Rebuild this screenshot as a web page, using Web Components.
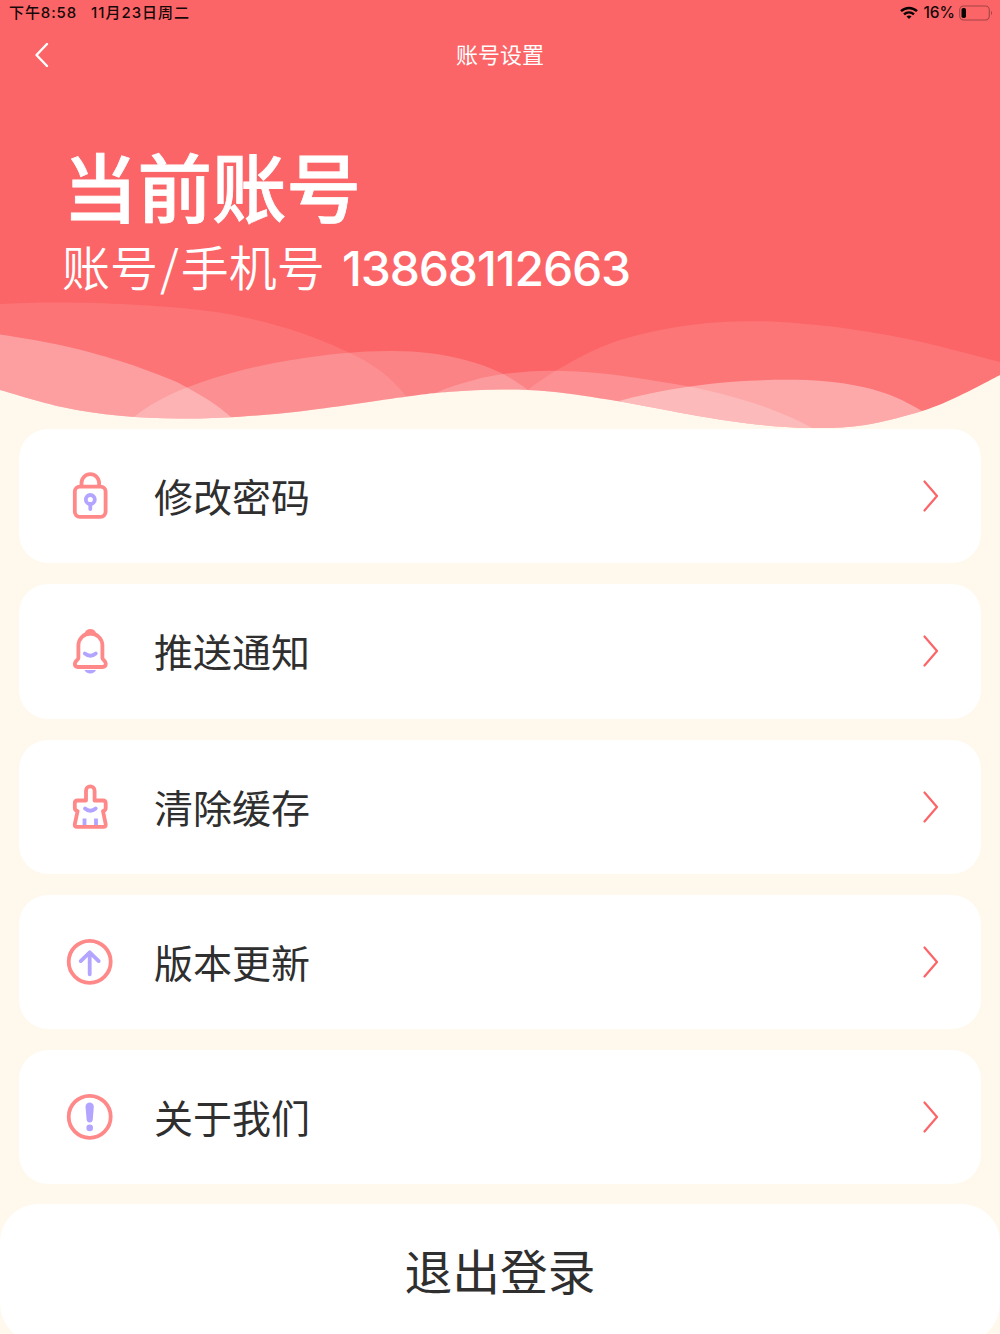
<!DOCTYPE html>
<html lang="zh-CN">
<head>
<meta charset="utf-8">
<title>账号设置</title>
<style>
  html, body {
    margin: 0;
    background: #fff8ed;
  }

  body {
    width: 1000px;
    height: 1334px;
    overflow: hidden;
    font-family: Inter, "Noto Sans CJK SC", sans-serif;
    color: #2f2f2f;
  }
</style>
</head>
<body>
<account-settings></account-settings>

<script>
// Catmull-Rom through the points, written out as cubic beziers
function smoothPath(points) {
  let d = `M${points[0]}`;
  for (let i = 0; i < points.length - 1; i++) {
    const p0 = points[i - 1] || points[i];
    const p1 = points[i];
    const p2 = points[i + 1];
    const p3 = points[i + 2] || p2;
    const c1 = [p1[0] + (p2[0] - p0[0]) / 6, p1[1] + (p2[1] - p0[1]) / 6];
    const c2 = [p2[0] - (p3[0] - p1[0]) / 6, p2[1] - (p3[1] - p1[1]) / 6];
    d += ` C${c1} ${c2} ${p2}`;
  }
  return d;
}

const EDGE = [[0, 390], [62, 407], [120, 415.8], [180, 418.5], [240, 416.7], [307, 410.5], [407, 396.5], [450, 391.8], [500, 389.5], [550, 391.5], [617, 401], [690, 414.5], [750, 423.7], [810, 428], [865, 425], [922, 411], [960, 395.5], [1000, 375]];

const HILLS = [
  { alpha: 0.1, points: [[-60, 308], [0, 304], [60, 302.5], [130, 304.5], [200, 310], [250, 318.5], [300, 332.5], [350, 353], [383, 373], [407, 397], [420, 415]] },
  { alpha: 0.31, points: [[-50, 328], [0, 334.5], [60, 345], [120, 361], [167, 378], [187, 387.5], [213, 403], [231, 417], [240, 426]] },
  { alpha: 0.2, points: [[120, 430], [135, 416], [157, 401.5], [187, 387.5], [233, 372.5], [283, 361.5], [340, 353.5], [390, 351], [430, 353.2], [467, 360.5], [500, 372.5], [528, 390], [545, 404]] },
  { alpha: 0.11, points: [[515, 401], [529, 389], [557, 370], [600, 347.5], [640, 334.5], [683, 326], [720, 322.3], [760, 321.3], [800, 323.5], [850, 329], [917, 341], [1000, 362]] },
  { alpha: 0.2, points: [[415, 402], [433, 394], [460, 384], [500, 374.5], [550, 370.7], [600, 373.3], [650, 380], [700, 388.7], [750, 402], [790, 417], [814, 429]] },
  { alpha: 0.38, points: [[605, 406], [617, 401.5], [650, 393.5], [687, 387], [733, 381.7], [783, 379.8], [825, 381.3], [863, 387], [895, 397], [922, 411], [940, 422]] },
];

class WaveBand extends HTMLElement {
  constructor() {
    super();
    const hills = HILLS.map(({ alpha, points }) => {
      const last = points[points.length - 1];
      return `<path d="${smoothPath(points)} L${last[0]},440 L${points[0][0]},440 Z" fill="#fff" fill-opacity="${alpha}"/>`;
    }).join("");
    this.attachShadow({ mode: "open" }).innerHTML = `
      <style>
        :host {
          display: block;
          height: 129px;
        }

        svg {
          display: block;
        }
      </style>
      <svg width="1000" height="129" viewBox="0 300 1000 129">
        <clipPath id="sea"><path d="${smoothPath(EDGE)} L1000,290 L0,290 Z"/></clipPath>
        <g clip-path="url(#sea)">
          <rect y="290" width="1000" height="150" fill="#fc6567"/>
          ${hills}
        </g>
      </svg>
    `;
  }
}

customElements.define("wave-band", WaveBand);

class StatusBar extends HTMLElement {
  constructor() {
    super();
    this.attachShadow({ mode: "open" }).innerHTML = `
      <style>
        :host {
          display: flex;
          align-items: center;
          height: 26px;
          padding: 0 7px 0 9px;
          box-sizing: border-box;
          font-size: 15px;
          font-weight: 500;
          line-height: 26px;
          color: #16090a;
        }

        .time {
          width: 82px;
          letter-spacing: 0.9px;
        }

        .date {
          flex: 1;
          letter-spacing: 1px;
        }

        .level {
          margin: 0 4px 0 5px;
          font-size: 15.5px;
        }

        svg {
          display: block;
        }
      </style>
      <span class="time">下午8:58</span>
      <span class="date">11月23日周二</span>
      <svg width="18" height="14" viewBox="0 0 18 14" fill="none" stroke="#080304" stroke-width="2.5">
        <path d="M1 5.2C5.7.8 12.3.8 17 5.2"/>
        <path d="M4 8.4C7 5.8 11 5.8 14 8.4"/>
        <path d="M6.5 10.5Q9 8.5 11.5 10.5L9 13Z" fill="#080304" stroke="none"/>
      </svg>
      <span class="level">16%</span>
      <svg width="34" height="16" viewBox="0 0 34 16">
        <rect x=".7" y="1" width="29.6" height="14" rx="4" fill="none" stroke="#a04445" stroke-width="1.1"/>
        <rect x="2.5" y="3" width="4.5" height="10" rx="1.8" fill="#080304"/>
        <path d="M32 5.8Q34 8 32 10.2Z" fill="#a04445"/>
      </svg>
    `;
  }
}

customElements.define("status-bar", StatusBar);

class NavBar extends HTMLElement {
  constructor() {
    super();
    this.attachShadow({ mode: "open" }).innerHTML = `
      <style>
        :host {
          display: grid;
          grid-template-columns: 56px 1fr 56px;
          align-items: center;
          height: 58px;
          color: #fff;
          font-size: 22px;
          line-height: 30px;
          text-align: center;
        }

        svg {
          display: block;
          margin-left: 34px;
        }
      </style>
      <svg width="16" height="28" viewBox="0 0 16 28" fill="none" stroke="#fff" stroke-width="2.4" stroke-linecap="round" stroke-linejoin="round">
        <path d="M13 3L2.5 14L13 25"/>
      </svg>
      <slot></slot>
    `;
  }
}

customElements.define("nav-bar", NavBar);

class AccountHeader extends HTMLElement {
  constructor() {
    super();
    this.attachShadow({ mode: "open" }).innerHTML = `
      <style>
        :host {
          display: block;
        }

        .top {
          height: 300px;
          background: #fc6567;
          color: #fff;
        }

        h1 {
          margin: 0;
          padding: 51px 0 5px 63px;
          font-family: "Noto Sans CJK SC", sans-serif;
          font-size: 74.5px;
          font-weight: 500;
          line-height: 100px;
          -webkit-text-stroke: 0.8px #fff;
        }

        .account {
          display: flex;
          padding-left: 62px;
          font-size: 48px;
          line-height: 56px;
        }

        .label {
          width: 280px;
          font-family: "Noto Sans CJK SC", sans-serif;
          font-weight: 350;
          line-height: 51px;
          white-space: nowrap;
        }

        .slash {
          margin: 0 2px;
        }

        .number {
          font-weight: 450;
          line-height: 57px;
          letter-spacing: -1.15px;
        }
      </style>
      <div class="top">
        <status-bar></status-bar>
        <nav-bar><span>账号设置</span></nav-bar>
        <h1>当前账号</h1>
        <div class="account">
          <span class="label">账号<span class="slash">/</span>手机号</span>
          <span class="number">${this.getAttribute("phone")}</span>
        </div>
      </div>
      <wave-band></wave-band>
    `;
  }
}

customElements.define("account-header", AccountHeader);

// 48x48 grid, pink outline with a violet accent
const ICONS = {
  lock: `
    <path d="M15.5 15V11a8.8 8.8 0 0 1 17.6 0V15"/>
    <rect x="8.8" y="14.6" width="30.8" height="30.2" rx="5"/>
    <g class="accent"><circle cx="24.3" cy="27.5" r="4.5"/><path d="M24.3 32V37"/></g>`,
  bell: `
    <path d="M12.4 31V18.5a12 12 0 0 1 24 0V31c0 2 3.4 2.7 3.4 5.8 0 2-1.4 3.2-3.4 3.2H12c-2 0-3.2-1.2-3.2-3.2 0-3.1 3.6-3.8 3.6-5.8Z"/>
    <path d="M20.6 6.3a4 3.6 0 0 1 7.6 0Z" fill="#ff8888"/>
    <g class="accent"><path d="M18.8 26.5Q24.3 31 29.8 26.5"/><path d="M18.5 43h11.5q-1.5 3.4-5.75 3.4t-5.75-3.4Z" fill="#b3a4ff" stroke="none"/></g>`,
  brush: `
    <path d="M20 17.5V7.7a4.3 4.3 0 0 1 8.6 0V17.5H37q2.7 0 2.7 2.7V25q0 2.5-2.7 3.2L39.7 41.2q.4 2.7-2.2 2.7H11q-2.6 0-2.2-2.7L11.6 28.2Q8.8 27.5 8.8 25V20.2q0-2.7 2.7-2.7Z"/>
    <g class="accent"><path d="M19 25.5Q24.3 30 29.7 25.5"/><path d="M18.5 42V35.5M30 42V35.5" stroke-linecap="butt"/></g>`,
  update: `
    <circle cx="23.7" cy="23.8" r="21"/>
    <g class="accent"><path d="M23.7 36.3V14.5M14.7 23.1L23.7 14.3L32.7 23.1"/></g>`,
  about: `
    <circle cx="23.7" cy="23.8" r="21"/>
    <path d="M19.5 13.7a4.15 4.15 0 0 1 8.3 0L26.8 26.3a3.1 3.1 0 0 1-6.2 0Z" fill="#b3a4ff" stroke="none"/>
    <circle cx="23.7" cy="34.9" r="3.3" fill="#b3a4ff" stroke="none"/>`,
};

class SettingItem extends HTMLElement {
  constructor() {
    super();
    this.attachShadow({ mode: "open" }).innerHTML = `
      <style>
        :host {
          display: flex;
          align-items: center;
          height: 134.3px;
          box-sizing: border-box;
          padding: 0 42px 0 47px;
          border-radius: 29px;
          background: #fff;
        }

        svg {
          display: block;
          fill: none;
        }

        .icon {
          stroke: #ff8888;
          stroke-width: 3.8;
          stroke-linejoin: round;
        }

        .accent {
          stroke: #b3a4ff;
          stroke-linecap: round;
        }

        .label {
          flex: 1;
          padding: 0 0 2px 40px;
          font-family: "Noto Sans CJK SC", sans-serif;
          font-size: 39px;
          font-weight: 400;
          line-height: 56px;
        }
      </style>
      <svg class="icon" width="48" height="48" viewBox="0 0 48 48">${ICONS[this.getAttribute("icon")]}</svg>
      <span class="label"><slot></slot></span>
      <svg width="16" height="32" viewBox="0 0 16 32" stroke="#fc6567" stroke-width="2.2" stroke-linecap="round" stroke-linejoin="round">
        <path d="M1.5 1.5L14 16L1.5 30.5"/>
      </svg>
    `;
  }
}

customElements.define("setting-item", SettingItem);

class LogoutButton extends HTMLElement {
  constructor() {
    super();
    this.attachShadow({ mode: "open" }).innerHTML = `
      <style>
        :host {
          display: flex;
          justify-content: center;
          align-items: center;
          height: 138px;
          padding-bottom: 5px;
          box-sizing: border-box;
          border-radius: 38px;
          background: #fff;
          font-family: "Noto Sans CJK SC", sans-serif;
          font-size: 47.7px;
          font-weight: 400;
          line-height: 64px;
        }
      </style>
      <slot></slot>
    `;
  }
}

customElements.define("logout-button", LogoutButton);

class AccountSettings extends HTMLElement {
  constructor() {
    super();
    this.attachShadow({ mode: "open" }).innerHTML = `
      <style>
        :host {
          display: block;
        }

        .list {
          display: flex;
          flex-direction: column;
          gap: 21px;
          padding: 0 19px 19.5px;
        }
      </style>
      <account-header phone="13868112663"></account-header>
      <div class="list">
        <setting-item icon="lock">修改密码</setting-item>
        <setting-item icon="bell">推送通知</setting-item>
        <setting-item icon="brush">清除缓存</setting-item>
        <setting-item icon="update">版本更新</setting-item>
        <setting-item icon="about">关于我们</setting-item>
      </div>
      <logout-button>退出登录</logout-button>
    `;
  }
}

customElements.define("account-settings", AccountSettings);
</script>
</body>
</html>
